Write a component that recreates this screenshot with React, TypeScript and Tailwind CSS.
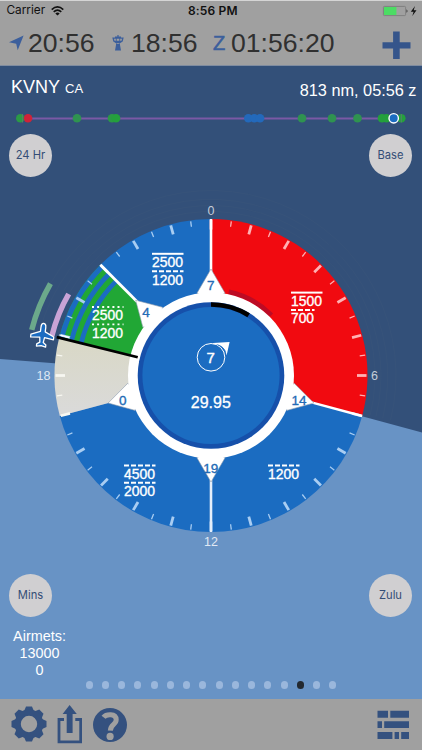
import React from "react";

const CX = 211;
const CY = 375.5;
const R = 156.5;

function at(r: number, deg: number): [number, number] {
  const a = (deg * Math.PI) / 180;
  return [CX + r * Math.sin(a), CY - r * Math.cos(a)];
}

function pt(r: number, deg: number) {
  const [x, y] = at(r, deg);
  return `${x.toFixed(2)} ${y.toFixed(2)}`;
}

function Sector({ from, to, fill }: { from: number; to: number; fill: string }) {
  return <path d={`M${CX} ${CY}L${pt(R, from)}A${R} ${R} 0 0 1 ${pt(R, to)}Z`} fill={fill} />;
}

function Arc({ r, from, to, width, color }: { r: number; from: number; to: number; width: number; color: string }) {
  return <path d={`M${pt(r, from)}A${r} ${r} 0 0 1 ${pt(r, to)}`} fill="none" stroke={color} strokeWidth={width} />;
}

function Spoke({ deg, r1, r2, width, color }: { deg: number; r1: number; r2: number; width: number; color: string }) {
  const [x1, y1] = at(r1, deg);
  const [x2, y2] = at(r2, deg);
  return <line x1={x1} y1={y1} x2={x2} y2={y2} stroke={color} strokeWidth={width} />;
}

function Label({ x, y, size, fill, bold = 0, children }: {
  x: number; y: number; size: number; fill: string; bold?: number; children: string;
}) {
  return (
    <text x={x} y={y} fontSize={size} fill={fill} stroke={fill} strokeWidth={bold} textAnchor="middle">
      {children}
    </text>
  );
}

function Ceiling({ x, y, value, dash, width = 31.5 }: { x: number; y: number; value: string; dash?: string; width?: number }) {
  return (
    <g>
      <line x1={x} x2={x + width} y1={y} y2={y} stroke="#fff" strokeWidth={dash === "2 3.1" ? 1.8 : 2} strokeDasharray={dash} />
      <text x={x} y={y + 13.3} fontSize="14.2" fill="#fff" stroke="#fff" strokeWidth="0.35" textLength={width - 0.5}
        lengthAdjust="spacingAndGlyphs">
        {value}
      </text>
    </g>
  );
}

const pointers = [0, 105, 180, 255, 315];
const ticks = Array.from({ length: 48 }, (_, i) => i * 7.5);
const route: [number, string][] = [
  [20.3, "#2b9a45"], [77, "#2f9350"], [112, "#2b9a45"], [116, "#24a03c"],
  [248.3, "#2369bb"], [254.3, "#2369bb"], [260, "#2369bb"],
  [302, "#2f9350"], [332, "#2f9350"], [357.5, "#2f9350"],
  [382, "#24a03c"], [386.5, "#24a03c"], [401.3, "#24a03c"],
];

function Dial() {
  return (
    <svg className="col-start-1 row-start-1 block h-[633px] w-[422px]" viewBox="0 66 422 633"
      fontFamily="'Liberation Sans', Arial, sans-serif">
      <rect x="0" y="66" width="422" height="633" fill="#6893c5" />
      <path d={`M0 66H422V432.5L${CX} ${CY}L0 359Z`} fill="#335079" />
      <g fill="none" stroke="#5c6a80" strokeOpacity="0.1">
        <path d={`M${pt(164, 284)}A164 164 0 0 1 ${pt(164, 104)}`} />
        <path d={`M${pt(170, 300)}A170 170 0 0 1 ${pt(170, 104)}`} />
        <path d={`M${pt(177, 284)}A177 177 0 0 1 ${pt(177, 104)}`} />
        <path d={`M${pt(185, 300)}A185 185 0 0 1 ${pt(185, 104)}`} />
      </g>

      <Sector from={0} to={105} fill="#f10a10" />
      <Sector from={105} to={255} fill="#1b6cc1" />
      <defs>
        <linearGradient id="haze" x1="0" y1="340" x2="0" y2="416" gradientUnits="userSpaceOnUse">
          <stop offset="0" stopColor="#d9d8c6" />
          <stop offset="1" stopColor="#dadada" />
        </linearGradient>
      </defs>
      <Sector from={255} to={284} fill="url(#haze)" />
      <Sector from={284} to={315} fill="#21a735" />
      <Sector from={315} to={360} fill="#1b6cc1" />
      <Arc r={154} from={284} to={315} width={5} color="#1b6cc1" />
      <Arc r={143.8} from={284} to={315} width={4.8} color="#1b6cc1" />
      <Arc r={133.8} from={284} to={315} width={4.8} color="#1b6cc1" />

      {ticks.map((deg) => {
        const major = deg % 15 === 0;
        const red = deg < 105;
        const grey = deg >= 255 && deg < 284;
        const color = grey ? "#f7f7f1" : red ? "#ffb1b3" : "#a9cdf2";
        return <Spoke key={deg} deg={deg} r1={major ? 146 : 150} r2={R - 1} width={major ? 2.8 : 1.3} color={color} />;
      })}

      <Spoke deg={0} r1={100} r2={R} width={2.6} color="#fff" />
      <Spoke deg={105} r1={104} r2={R} width={2.4} color="#fff" />
      <Spoke deg={180} r1={104} r2={R} width={2.6} color="#e4eefa" />
      <Spoke deg={315} r1={104} r2={R} width={2.8} color="#fff" />
      <Arc r={85.3} from={12} to={45} width={5} color="#bd0b24" />

      {pointers.map((deg) => (
        <path key={deg} d={`M${pt(106.5, deg)}L${pt(83.5, deg - 9.7)}L${pt(75, deg)}L${pt(83.5, deg + 9.7)}Z`}
          fill="#fff" stroke="#8c9bad" strokeWidth="0.6" />
      ))}
      <circle cx={CX} cy={CY} r="83" fill="#fff" />
      <circle cx={CX} cy={CY} r="73.3" fill="#1650aa" />
      <circle cx={CX} cy={CY} r="68.6" fill="#1b6cc1" />
      <Arc r={71} from={0} to={32} width={4.7} color="#000" />
      <Spoke deg={284} r1={75.5} r2={159} width={2.8} color="#000" />
      <Spoke deg={285} r1={147} r2={157} width={1.5} color="#fff" />

      <Label x={210.8} y={290} size={13.5} fill="#236bb5" bold={0.35}>7</Label>
      <Label x={298.9} y={405} size={13.5} fill="#236bb5" bold={0.35}>14</Label>
      <Label x={210.8} y={472.5} size={13.5} fill="#236bb5" bold={0.35}>19</Label>
      <Label x={122.7} y={405} size={13.5} fill="#236bb5" bold={0.35}>0</Label>
      <Label x={146} y={316.5} size={13.5} fill="#236bb5" bold={0.35}>4</Label>

      <Label x={211} y={215.3} size={12.5} fill="#c4ccd8">0</Label>
      <Label x={374.5} y={380} size={12.5} fill="#c4ccd8">6</Label>
      <Label x={211} y={546} size={12.5} fill="#e0e9f4">12</Label>
      <Label x={43.5} y={380} size={12.5} fill="#dfe8f3">18</Label>

      <Ceiling x={152} y={253.8} value="2500" />
      <Ceiling x={152} y={271.3} value="1200" dash="5 2" />
      <Ceiling x={92} y={307} value="2500" dash="2 3.1" />
      <Ceiling x={92} y={324.3} value="1200" dash="2 3.1" />
      <Ceiling x={291} y={292.6} value="1500" />
      <Ceiling x={291} y={310} value="700" dash="5 2" width={23.5} />
      <Ceiling x={124} y={465.6} value="4500" dash="5 2" />
      <Ceiling x={124} y={482.8} value="2000" dash="5 2" />
      <Ceiling x={268} y={465.6} value="1200" dash="5 2" />

      <circle cx="211" cy="357.3" r="13.8" fill="none" stroke="#fff" strokeWidth="1" />
      <path d="M213 343L229.6 342L226.6 355.5C225.8 348.5 220.5 344 213 343.8Z" fill="#fff" />
      <path d="M217.5 344.9Q223 346.2 225.6 351.6" fill="none" stroke="#1b6cc1" strokeWidth="0.7" />
      <text x="210.7" y="362.6" textAnchor="middle" fontSize="15" fill="#fff" stroke="#fff" strokeWidth="0.4">7</text>
      <text x="210.8" y="408.3" textAnchor="middle" fontSize="16" fill="#fff" stroke="#fff" strokeWidth="0.3">29.95</text>

      <Arc r={185} from={284.3} to={299.8} width={5.5} color="#6ba98b" />
      <Arc r={164} from={284} to={299.8} width={5.5} color="#c9a3d6" />
      <g transform="translate(42.4 335.2) rotate(7)">
        <path
          d="M0-11.8C1.8-11.8 2.4-9.8 2.4-8V-3.6L11.5 0.4V3.2L2.4 2.2L1.7 7.2L4.6 9.3V11.5L0 10.6L-4.6 11.5V9.3L-1.7 7.2L-2.4 2.2L-11.5 3.2V0.4L-2.4-3.6V-8C-2.4-9.8-1.8-11.8 0-11.8Z"
          fill="#1b6cc1" stroke="#fff" strokeWidth="1.3" strokeLinejoin="round" />
      </g>
    </svg>
  );
}

function Route() {
  return (
    <svg className="mt-[7px] block h-[16px] w-[422px]" viewBox="0 110 422 16">
      <line x1="20" x2="402" y1="118.6" y2="118.6" stroke="#7b59a5" strokeWidth="2" />
      {route.map(([x, c]) => <circle key={x} cx={x} cy="118.3" r="4.3" fill={c} />)}
      <circle cx="28" cy="118.3" r="4.3" fill="#cf2338" />
      <path d="M22.4 114V122.5M401.3 114V122.5" stroke="#57806b" strokeWidth="1" />
      <circle cx="393.7" cy="118.3" r="4.7" fill="#1b6cc1" stroke="#fff" strokeWidth="1.4" />
    </svg>
  );
}

function RoundButton({ children }: { children: string }) {
  return (
    <button className="flex size-[43px] items-center justify-center rounded-full bg-[#d0cfd1] font-['Inter',sans-serif] text-[11.2px] leading-none text-[#344d76]">
      {children}
    </button>
  );
}

function Header() {
  return (
    <header className="h-[66px] border-t border-b border-t-[#d5d5d5] border-b-[#7f8ca0] bg-[#a0a0a0]">
      <div className="flex h-[20px] items-center pl-[6.5px] font-['Inter',sans-serif] text-[12px] leading-none text-[#111]">
        <span className="w-[44.5px] text-[11.8px]">Carrier</span>
        <svg className="h-[10px] w-[13px]" viewBox="0 0 13 10">
          <g fill="none" stroke="#111" strokeWidth="1.6">
            <path d="M0.7 3.6Q6.5-1.7 12.3 3.6" />
            <path d="M2.7 5.9Q6.5 2.4 10.3 5.9" />
          </g>
          <path d="M6.5 9.6L4.3 7.4Q6.5 5.4 8.7 7.4Z" fill="#111" />
        </svg>
        <span className="ml-[124px] w-[52px] whitespace-nowrap font-semibold tracking-[0.15px]">8:56 PM</span>
        <svg className="ml-auto mr-[4px] h-[12px] w-[36px]" viewBox="382 5 36 12">
          <rect x="383.4" y="6.4" width="22.2" height="9.2" rx="1" fill="none" stroke="#777" strokeWidth="0.8" />
          <rect x="384" y="7" width="12.4" height="8" fill="#4cdc64" />
          <path d="M406.5 9.2Q408.5 11 406.5 12.8Z" fill="#333" />
          <path d="M415 6L410.8 11.8H413.6L412.3 16L416.5 10.2H413.7Z" fill="#111" />
        </svg>
      </div>
      <div className="flex h-[44px] items-center font-['Liberation_Sans',sans-serif] text-[26.6px] leading-none text-[#303030]">
        <svg className="ml-[9px] mr-[4px] h-[16px] w-[15px]" viewBox="0 0 15 16">
          <path d="M14.6 0.5L8.7 15.2L7.2 8.8L0 7.2Z" fill="#3c5f9c" />
        </svg>
        <span className="w-[67px]">20:56</span>
        <svg className="ml-[17px] mr-[7px] h-[16px] w-[12px]" viewBox="0 0 12 16">
          <path d="M5.4 0H6.6V1.4H9V2.4H11.7L10.7 6.6L8 8.2V10L9 15.6H3L4 10V8.2L1.3 6.6L0.3 2.4H3V1.4H5.4Z" fill="#3c5f9c" />
          <path d="M2 3.7H3.8V5.8H2.5ZM4.7 3.7H7.3V5.8H4.7ZM8.2 3.7H10L9.5 5.8H8.2ZM4.5 8.2H7.5V9H4.5Z" fill="#a0a0a0" />
        </svg>
        <span className="w-[67px]">18:56</span>
        <span className="ml-[15px] w-[18px] text-[20px] text-[#3c5f9c] [-webkit-text-stroke:0.6px_#3c5f9c]">Z</span>
        <span className="w-[104px]">01:56:20</span>
        <svg className="ml-auto mr-[11px] mt-[5px] size-[29px]" viewBox="0 0 29 29">
          <path d="M11.1 0.5H17.7V11.2H28.5V17.5H17.7V28H11.1V17.5H0.5V11.2H11.1Z" fill="#35558b" />
        </svg>
      </div>
    </header>
  );
}

function PageDots() {
  return (
    <div className="flex h-[8px] items-center gap-[9.07px] pl-[85.5px]">
      {Array.from({ length: 16 }, (_, i) => (
        <span key={i} className={i === 13 ? "size-[7.2px] rounded-full bg-[#232930]" : "size-[7.2px] rounded-full bg-[#9ab7dc]"} />
      ))}
    </div>
  );
}

function Footer() {
  const teeth = Array.from({ length: 8 }, (_, i) => i * 45);
  return (
    <footer className="flex h-[51px] bg-[#a0a0a0]">
      <svg className="ml-[11px] mt-[7px] size-[36px]" viewBox="-18 -18 36 36">
        {teeth.map((a) => (
          <path key={a} d="M-5.4-12L-3-17.5H3L5.4-12Z" fill="#34517f" transform={`rotate(${a})`} />
        ))}
        <circle r="11.3" fill="none" stroke="#34517f" strokeWidth="6.2" />
      </svg>
      <svg className="ml-[10px] mt-[5px] h-[40px] w-[25px]" viewBox="57 704 25 40">
        <path d="M64 719.5H59V741.8H80.7V719.5H75.3" fill="none" stroke="#34517f" strokeWidth="2.8" />
        <path d="M69.6 705L76.8 714H72.6V733H66.7V714H62.6Z" fill="#34517f" />
      </svg>
      <svg className="ml-[11px] mt-[9px] size-[34px]" viewBox="0 0 34 34">
        <circle cx="17" cy="17" r="17" fill="#34517f" />
        <path d="M10.5 9.2C13 6.1 23 4.8 23.2 11.6C23.4 16.6 17.5 16 17.3 22.6" fill="none" stroke="#a0a0a0" strokeWidth="5" />
        <circle cx="17.1" cy="28.4" r="3.6" fill="#a0a0a0" />
      </svg>
      <svg className="ml-auto mr-[12px] mt-[11px] h-[29px] w-[33px]" viewBox="0 0 33 29">
        <path d="M.5.8H11V7.7H.5ZM13.3.8H32V7.7H13.3ZM.5 11.3H5V18H.5ZM7.2 11.3H32V18H7.2ZM.5 22H15.4V29H.5ZM17.6 22H22V29H17.6ZM24.2 22H32V29H24.2Z" fill="#34517f" />
      </svg>
    </footer>
  );
}

export default function App() {
  return (
    <div className="h-[750px] w-[422px] overflow-hidden">
      <Header />
      <main className="grid h-[633px] grid-cols-1 grid-rows-1">
        <Dial />
        <div className="z-10 col-start-1 row-start-1 flex h-[633px] flex-col font-['Liberation_Sans',sans-serif] text-white">
          <div className="flex h-[37px] items-start justify-between pl-[11px] pr-[5.5px]">
            <div className="flex items-baseline gap-[5px] pt-[11px] leading-[20px]">
              <span className="text-[18px]">KVNY</span>
              <span className="text-[13px]">CA</span>
            </div>
            <span className="pt-[14px] text-[16.3px] leading-[20px]">813 nm, 05:56 z</span>
          </div>
          <Route />
          <div className="mt-[8px] flex justify-between pl-[9px] pr-[10px]">
            <RoundButton>24 Hr</RoundButton>
            <RoundButton>Base</RoundButton>
          </div>
          <div className="mt-auto flex justify-between pl-[9px] pr-[10px]">
            <RoundButton>Mins</RoundButton>
            <RoundButton>Zulu</RoundButton>
          </div>
          <div className="mt-[11px] h-[53px] w-[79px] whitespace-pre-line text-center text-[14.4px] leading-[17.2px]">
            {"Airmets:\n13000\n0"}
          </div>
          <div className="pb-[10px]">
            <PageDots />
          </div>
        </div>
      </main>
      <Footer />
    </div>
  );
}
